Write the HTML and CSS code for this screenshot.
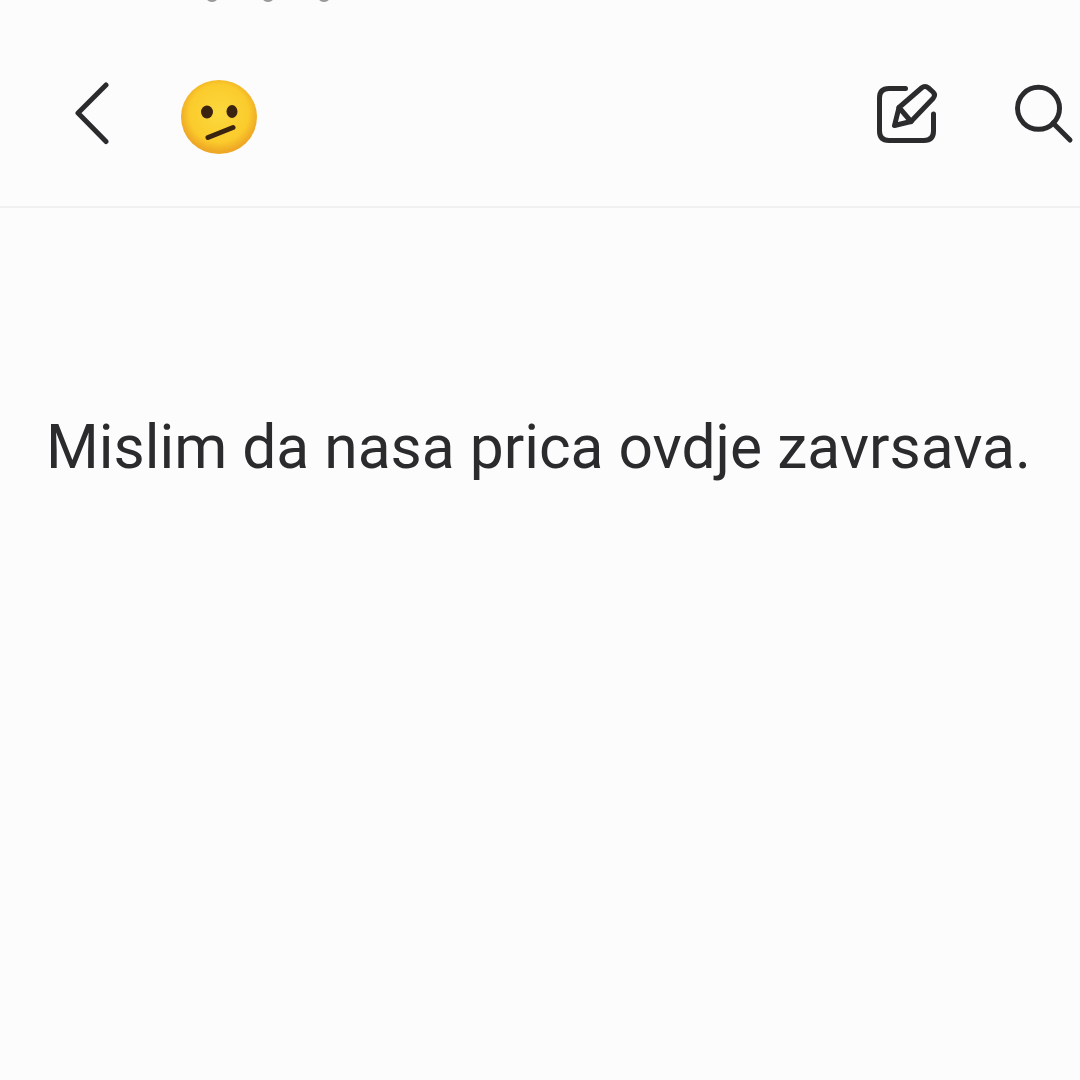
FILE: index.html
```html
<!DOCTYPE html>
<html lang="en">
<head>
    <meta charset="UTF-8">
    <title>Chat</title>
    <link rel="stylesheet" href="styles.css">
</head>
<body>
    <div class="status-dots">
        <span class="dot"></span>
        <span class="dot"></span>
        <span class="dot"></span>
    </div>
    <header class="top-bar">
        <div class="bar-left">
            <svg class="icon-back" width="34" height="64" viewBox="0 0 34 64">
                <path d="M31 3 L3 31 L31 59.500" fill="none" stroke="#2b2b2d" stroke-width="5" stroke-linecap="round" stroke-linejoin="round"/>
            </svg>
            <svg class="emoji" width="78" height="76" viewBox="0 0 78 76">
                <defs>
                    <radialGradient id="face" cx="50%" cy="45%" r="52%">
                        <stop offset="0%" stop-color="#fbd93f"/>
                        <stop offset="75%" stop-color="#fbcb2c"/>
                        <stop offset="100%" stop-color="#eea825"/>
                    </radialGradient>
                </defs>
                <ellipse cx="39" cy="38" rx="38" ry="37" fill="url(#face)"/>
                <ellipse cx="27" cy="33" rx="6" ry="6.500" fill="#3a2410"/>
                <ellipse cx="52" cy="32.500" rx="5.500" ry="6.500" fill="#3a2410"/>
                <path d="M28 58.500 L53 48.500" fill="none" stroke="#3a2410" stroke-width="5" stroke-linecap="round"/>
            </svg>
        </div>
        <div class="bar-right">
            <svg class="icon-edit" width="62" height="62" viewBox="0 0 62 62">
                <path d="M29.500 5.500 H13 Q3.500 5.500 3.500 15 V48 Q3.500 57.500 13 57.500 H48 Q57.500 57.500 57.500 48 V31" fill="none" stroke="#2b2b2d" stroke-width="5" stroke-linecap="round"/>
                <path d="M45.500 5 Q49 2 52.500 5 L57 9 Q60 12 57 15.500 L35 38.500 L23 24.500 Z" fill="none" stroke="#2b2b2d" stroke-width="5" stroke-linejoin="round"/>
                <path d="M23 24.500 L18.500 42.500 L35 38.500" fill="none" stroke="#2b2b2d" stroke-width="5" stroke-linejoin="round" stroke-linecap="round"/>
            </svg>
            <svg class="icon-search" width="62" height="62" viewBox="0 0 62 62">
                <circle cx="26.500" cy="25.300" r="21" fill="none" stroke="#2b2b2d" stroke-width="5"/>
                <path d="M41 40 L58 57" fill="none" stroke="#2b2b2d" stroke-width="5" stroke-linecap="round"/>
            </svg>
        </div>
    </header>
    <main class="message">
        <p>Mislim da nasa prica ovdje zavrsava.</p>
    </main>
</body>
</html>
```

FILE: styles.css
```css
html, body {
    margin: 0;
    padding: 0;
}
body {
    width: 1080px;
    height: 1080px;
    overflow: hidden;
    background: #fcfcfc;
    color: #2b2b2d;
    font-family: Roboto, sans-serif;
    position: relative;
}
.status-dots {
    position: absolute;
    top: -4px;
    left: 207px;
    display: flex;
    gap: 46px;
}
.dot {
    width: 10px;
    height: 6px;
    border-radius: 50%;
    background: #9a9a9a;
}
.top-bar {
    height: 206px;
    border-bottom: 2px solid #f0f0f0;
    display: flex;
    justify-content: space-between;
    box-sizing: content-box;
}
.bar-left {
    display: flex;
    align-items: flex-start;
    padding: 79px 0 0 75px;
    gap: 71px;
}
.icon-back {
    margin-top: 3px;
}
.bar-right {
    display: flex;
    align-items: flex-start;
    padding: 83px 6px 0 0;
    gap: 74px;
}
.message {
    padding: 204px 0 0 46px;
}
.message p {
    margin: 0;
    font-size: 60.5px;
    line-height: 71px;
    white-space: nowrap;
}
```
